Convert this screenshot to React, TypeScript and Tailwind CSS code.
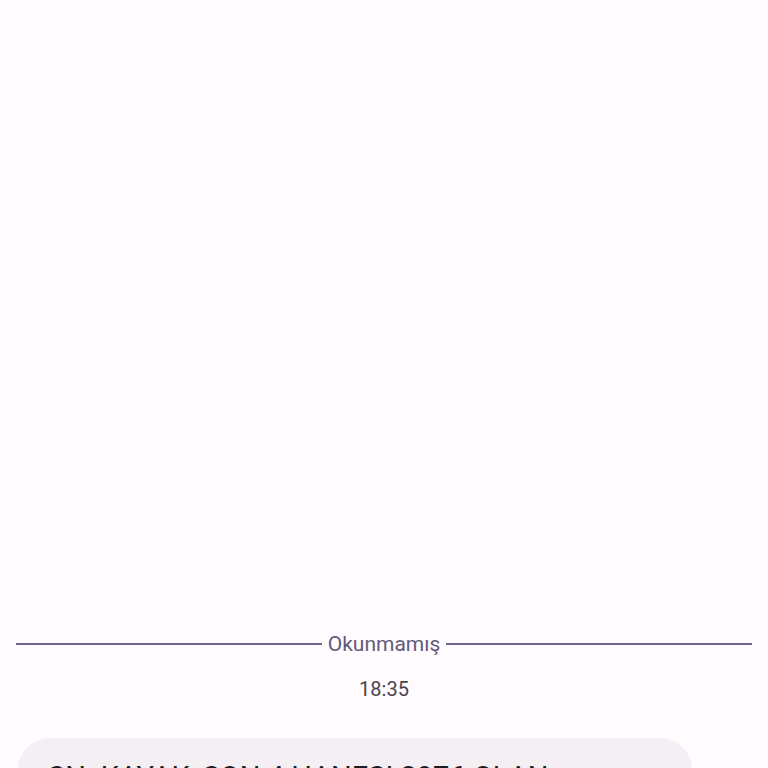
export default function App() {
  return (
    <div
      className="h-[768px] w-full overflow-hidden bg-[#fffbfe] flex flex-col"
      style={{ fontFamily: 'Roboto, "Noto Sans", sans-serif' }}
    >
      <div className="h-[632px] shrink-0" />
      {/* unread divider */}
      <div className="flex shrink-0 items-center gap-[6px] px-[16px] h-[24px]">
        <div className="flex-1 h-[2px] bg-[#6a6589]" />
        <span className="text-[21px] leading-[24px] text-[#625b7a]">Okunmamış</span>
        <div className="flex-1 h-[2px] bg-[#6a6589]" />
      </div>
      <div className="shrink-0 pt-[21px] text-center text-[20px] leading-[24px] text-[#49454f]">
        18:35
      </div>
      <div className="shrink-0 pt-[37px] pl-[18px] pr-[76px]">
        <div className="rounded-[32px] bg-[#f3eff3] pl-[30px] pr-[24px] pt-[19px] pb-[20px]">
          <p className="text-[29px] leading-[40px] text-[#1c1b1f]">
            SN. KAYAK, SON 4 HANESI 2976 OLAN KARTINIZLA YAPILAN ISLEM
          </p>
        </div>
      </div>
    </div>
  );
}
